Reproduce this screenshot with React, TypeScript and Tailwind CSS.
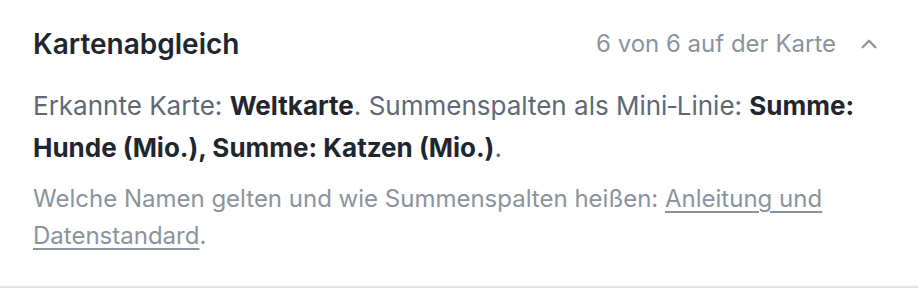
import React from 'react'

function Kartenabgleich() {
  return (
    <div className="w-[918px] h-[288px] bg-white font-['Inter',sans-serif]">
      <div className="h-[288px] border-b-2 border-[#e1e3e7] px-[33px] pt-[25px]">
        <div className="flex items-center justify-between">
          <h2 className="text-[28px] leading-[38px] font-semibold text-[#1f2630]">Kartenabgleich</h2>
          <button className="flex items-center gap-[22px] text-[24px] text-[#8b939e] mr-[5px]">
            <span>6 von 6 auf der Karte</span>
            <svg width="22" height="22" viewBox="0 0 24 24" fill="none" stroke="currentColor" strokeWidth="2.5" strokeLinecap="round" strokeLinejoin="round">
              <path d="M5 15.5l7-7 7 7" />
            </svg>
          </button>
        </div>
        <p className="mt-[22px] text-[26px] leading-[42px] text-[#5f6875]">
          Erkannte Karte: <strong className="font-bold text-[#1f2630]">Weltkarte</strong>. Summenspalten als Mini‑Linie: <strong className="font-bold text-[#1f2630]">Summe: Hunde (Mio.), Summe: Katzen (Mio.)</strong>.
        </p>
        <p className="mt-[11px] text-[24px] leading-[37px] text-[#8b939e] pr-[60px]">
          Welche Namen gelten und wie Summenspalten heißen: <a href="#" className="underline underline-offset-4 decoration-[1.5px]">Anleitung und Datenstandard</a>.
        </p>
      </div>
    </div>
  )
}

export default function App() {
  return <Kartenabgleich />
}
